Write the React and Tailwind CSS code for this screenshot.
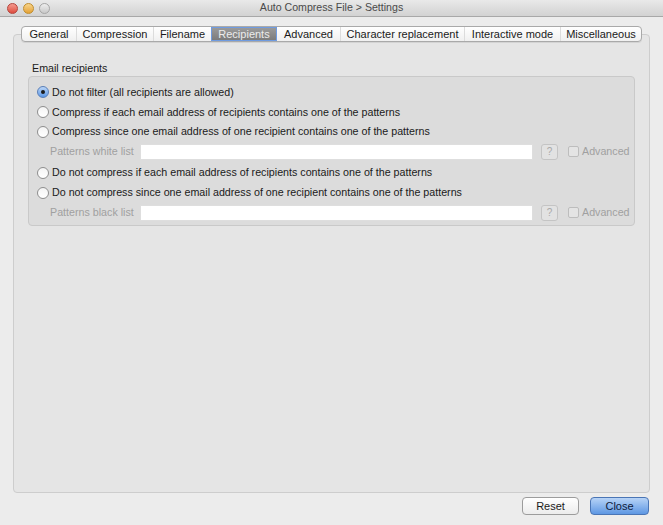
import React from "react";

const tabs = [
  { label: "General", w: 54 },
  { label: "Compression", w: 77 },
  { label: "Filename", w: 58 },
  { label: "Recipients", w: 66, active: true },
  { label: "Advanced", w: 63 },
  { label: "Character replacement", w: 124 },
  { label: "Interactive mode", w: 96 },
  { label: "Miscellaneous", w: 81 },
];

const Radio = ({ checked }) =>
  checked ? (
    <span className="flex h-[12px] w-[12px] shrink-0 items-center justify-center rounded-full border border-[#5a7fb8] bg-gradient-to-b from-[#bcd6f7] to-[#5c98e6]">
      <span className="h-[4px] w-[4px] rounded-full bg-[#1b1b1b]" />
    </span>
  ) : (
    <span className="h-[12px] w-[12px] shrink-0 rounded-full border border-[#8e8e8e] bg-gradient-to-b from-[#f4f4f4] to-[#ffffff]" />
  );

const RadioRow = ({ text, checked, h }) => (
  <div className={`flex items-center gap-[3px] whitespace-nowrap pl-[8px] ${h}`}>
    <Radio checked={checked} />
    <span>{text}</span>
  </div>
);

const PatternRow = ({ label }) => (
  <div className="flex h-[21px] items-center whitespace-nowrap pl-[21px] text-[#a0a0a0]">
    <span className="w-[90px] shrink-0">{label}</span>
    <div className="h-[16px] w-[393px] shrink-0 border border-[#dedede] bg-white" />
    <div className="ml-[8px] flex h-[16px] w-[17px] shrink-0 items-center justify-center rounded-[3px] border border-[#c4c4c4] bg-[#e2e2e2] text-[10px] text-[#a9a9a9]">
      ?
    </div>
    <div className="ml-[10px] h-[11px] w-[11px] shrink-0 rounded-[2px] border border-[#bdbdbd] bg-[#e4e4e4]" />
    <span className="ml-[3px]">Advanced</span>
  </div>
);

export default function App() {
  return (
    <div
      className="flex h-[525px] w-[663px] flex-col overflow-hidden bg-[#ececec] text-[10.7px] text-[#1a1a1a]"
      style={{ fontFamily: '"Liberation Sans", Arial, sans-serif' }}
    >
      {/* title bar */}
      <div className="relative flex h-[17px] shrink-0 items-center justify-center border-b border-[#a8a8a8] bg-gradient-to-b from-[#e9e9e9] to-[#d2d2d2]">
        <div className="absolute left-[7px] top-[3px] flex gap-[5px]">
          <span className="h-[11px] w-[11px] rounded-full border border-[#b4443c] bg-gradient-to-b from-[#f49a8f] to-[#dd4a3e]" />
          <span className="h-[11px] w-[11px] rounded-full border border-[#c08d2d] bg-gradient-to-b from-[#f8d58a] to-[#e3a131]" />
          <span className="h-[11px] w-[11px] rounded-full border border-[#a6a6a6] bg-gradient-to-b from-[#eeeeee] to-[#c9c9c9]" />
        </div>
        <span className="text-[10.6px] text-[#4a4a4a]">Auto Compress File &gt; Settings</span>
      </div>

      {/* tabs */}
      <div className="relative z-10 mt-[9px] flex justify-center">
        <div className="flex h-[16px] items-stretch overflow-hidden rounded-[4px] border border-[#a9a9a9] bg-gradient-to-b from-[#ffffff] to-[#f0f0f0] text-[11px] shadow-[0_1px_0_rgba(0,0,0,0.08)]">
          {tabs.map((t, i) => (
            <div
              key={t.label}
              style={{ width: t.w }}
              className={
                t.active
                  ? "flex items-center justify-center whitespace-nowrap border border-[#6f9be0] bg-gradient-to-b from-[#9a9a9a] to-[#7c7c7c] text-[#ececec]"
                  : `flex items-center justify-center whitespace-nowrap ${
                      i > 0 && !tabs[i - 1].active ? "border-l border-[#dcdcdc]" : ""
                    }`
              }
            >
              {t.label}
            </div>
          ))}
        </div>
      </div>

      {/* panel */}
      <div className="-mt-[8px] ml-[13px] flex h-[459px] w-[637px] flex-col rounded-[4px] border border-[#cdcdcd] bg-[#e5e5e5] px-[14px] pt-[27px]">
        <div className="pl-[4px] leading-[13px]">Email recipients</div>
        <div className="mt-[1px] flex flex-col rounded-[4px] border border-[#c9c9c9] bg-[#dcdcdc] pb-[2px] pt-[5px]">
          <RadioRow checked h="h-[20px]" text="Do not filter (all recipients are allowed)" />
          <RadioRow h="h-[20px]" text="Compress if each email address of recipients contains one of the patterns" />
          <RadioRow h="h-[19px]" text="Compress since one email address of one recipient contains one of the patterns" />
          <PatternRow label="Patterns white list" />
          <RadioRow h="h-[21px]" text="Do not compress if each email address of recipients contains one of the patterns" />
          <RadioRow h="h-[19px]" text="Do not compress since one email address of one recipient contains one of the patterns" />
          <PatternRow label="Patterns black list" />
        </div>
      </div>

      {/* footer */}
      <div className="mr-[14px] mt-[4px] flex justify-end gap-[11px]">
        <button className="flex h-[18px] w-[57px] items-center justify-center rounded-[4px] border border-[#9c9c9c] bg-gradient-to-b from-[#ffffff] to-[#ececec] text-[11px] text-[#1a1a1a]">
          Reset
        </button>
        <button className="flex h-[18px] w-[59px] items-center justify-center rounded-[4px] border border-[#4a75b5] bg-gradient-to-b from-[#b7d3f6] to-[#5d97e3] text-[11px] text-[#10203a]">
          Close
        </button>
      </div>
    </div>
  );
}
